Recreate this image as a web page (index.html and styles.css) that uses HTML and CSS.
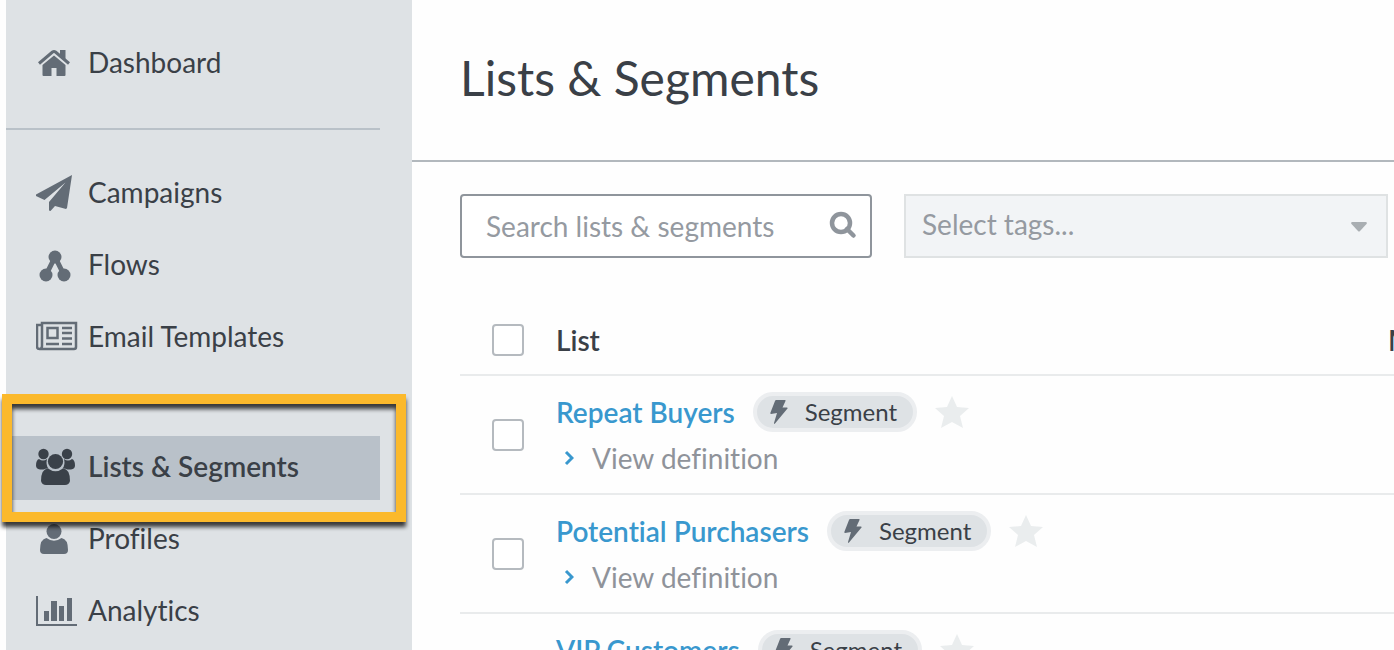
FILE: index.html
```html
<!DOCTYPE html>
<html lang="en">
<head>
  <meta charset="UTF-8">
  <meta name="viewport" content="width=device-width, initial-scale=1.0">
  <title>Lists &amp; Segments</title>
  <link rel="stylesheet" href="styles.css">
</head>
<body>
  <!-- Shared icons -->
  <svg class="sprite" aria-hidden="true">
    <symbol id="bolt" viewBox="0 0 18 24">
      <path d="M6 0H15Q16 0 15.500 1L12.500 7.500H17Q18 7.500 17.500 8.500L5 23.500Q4 24.500 4 23L7 13L1 14Q0 14 0.500 12.500L5 1Q5.500 0 6 0Z"/>
    </symbol>
    <symbol id="star" viewBox="0 0 34 32">
      <path d="M17 0L22 11L34 12L25 20L28 32L17 26L6 32L9 20L0 12L12 11Z"/>
    </symbol>
    <symbol id="chevron" viewBox="0 0 10 16">
      <path d="M2 2L8 8L2 14" fill="none" stroke="currentColor" stroke-width="3"/>
    </symbol>
  </svg>

  <aside class="sidebar">
    <nav class="nav">
      <ul class="nav-group">
        <li class="nav-item">
          <a href="#">
            <svg class="nav-icon" viewBox="0 0 42 40">
              <path d="M24 6H29.500V17L24 12Z"/>
              <path d="M3 19.500L16.500 8Q18 7 19.500 8L33 19.500" fill="none" stroke="currentColor" stroke-width="3"/>
              <path d="M18 11.500L29.500 21V31Q29.500 32 28.500 32H20.500V24H15.500V32H7.500Q6.500 32 6.500 31V21Z"/>
            </svg>
            <span>Dashboard</span>
          </a>
        </li>
      </ul>
      <ul class="nav-group">
        <li class="nav-item">
          <a href="#">
            <svg class="nav-icon" viewBox="0 0 42 40">
              <path d="M36 1L0 20.500V22L8.500 26L29.500 8.500L13 28V36.500L14.500 37L19 32L30 35L31 34Z"/>
            </svg>
            <span>Campaigns</span>
          </a>
        </li>
        <li class="nav-item">
          <a href="#">
            <svg class="nav-icon" viewBox="0 0 42 40">
              <path d="M10 29L19 11L28 29" fill="none" stroke="currentColor" stroke-width="5"/>
              <circle cx="19" cy="11" r="6.500"/>
              <circle cx="10" cy="29" r="6.500"/>
              <circle cx="28" cy="29" r="6.500"/>
            </svg>
            <span>Flows</span>
          </a>
        </li>
        <li class="nav-item">
          <a href="#">
            <svg class="nav-icon" viewBox="0 0 42 40">
              <g fill="none" stroke="currentColor" stroke-width="2.500">
                <path d="M6 28V5H40V29Q40 31 38 31H3.500Q1 31 1 28.500V7H6M6 28Q6 31 3.500 31"/>
                <rect x="11.500" y="10" width="10" height="10"/>
                <path d="M26 10H36M26 15H36M26 20.500H36M26 26H36M10 26H23"/>
              </g>
            </svg>
            <span>Email Templates</span>
          </a>
        </li>
      </ul>
      <ul class="nav-group">
        <li class="nav-item active">
          <a href="#">
            <svg class="nav-icon" viewBox="0 0 42 40">
              <circle cx="7.500" cy="6" r="5.200"/>
              <circle cx="31" cy="6" r="5.200"/>
              <circle cx="19.500" cy="13.500" r="7.600"/>
              <path d="M3 11Q7 14 11 11Q9.500 17 12.500 20.500Q9 20.500 7.500 21.500H4Q0 21 0 17.500Q0 12 3 11Z"/>
              <path d="M36 11Q32 14 28 11Q29.500 17 26.500 20.500Q30 20.500 31.500 21.500H35Q39 21 39 17.500Q39 12 36 11Z"/>
              <path d="M12 20.500Q19.500 26 27 20.500Q34 21 34 33Q33 37 29 37H10Q6 37 5 33Q5 21 12 20.500Z"/>
            </svg>
            <span>Lists &amp; Segments</span>
          </a>
          <div class="highlight"></div>
        </li>
        <li class="nav-item">
          <a href="#">
            <svg class="nav-icon" viewBox="0 0 42 40">
              <circle cx="18" cy="11.500" r="7.500"/>
              <path d="M10.500 18Q18 23.500 25.500 18Q32 19 32 30Q32 34 28 34H8Q4 34 4 30Q4 19 10.500 18Z"/>
            </svg>
            <span>Profiles</span>
          </a>
        </li>
        <li class="nav-item">
          <a href="#">
            <svg class="nav-icon" viewBox="0 0 42 40">
              <path d="M0 4H2V32H41V34H0Z"/>
              <path d="M8 19H13V29H8ZM15 9H21V29H15ZM23 14H28V29H23ZM31 6H36V29H31Z"/>
            </svg>
            <span>Analytics</span>
          </a>
        </li>
      </ul>
    </nav>
  </aside>

  <main class="main">
    <header class="page-header">
      <h1>Lists &amp; Segments</h1>
    </header>

    <div class="filters">
      <div class="search">
        <input type="text" placeholder="Search lists &amp; segments" aria-label="Search lists &amp; segments">
        <svg class="search-icon" viewBox="0 0 28 28">
          <circle cx="12" cy="12" r="9" fill="none" stroke="currentColor" stroke-width="4.500"/>
          <path d="M18 18L24.500 24.500" stroke="currentColor" stroke-width="4.500" stroke-linecap="round"/>
        </svg>
      </div>
      <div class="tags">
        <select aria-label="Select tags">
          <option>Select tags...</option>
        </select>
        <svg class="caret" viewBox="0 0 16 10">
          <path d="M1 0H15Q16.500 0.500 15.500 2L9 9Q8 10 7 9L0.500 2Q-0.500 0.500 1 0Z"/>
        </svg>
      </div>
    </div>

    <table class="list-table">
      <thead>
        <tr>
          <th class="check-col"><input type="checkbox" aria-label="Select all"></th>
          <th class="list-col">List</th>
          <th>Members</th>
        </tr>
      </thead>
      <tbody>
        <tr>
          <td class="check-col"><input type="checkbox" aria-label="Repeat Buyers"></td>
          <td>
            <div class="list-title">
              <a href="#">Repeat Buyers</a>
              <span class="badge"><svg><use href="#bolt"/></svg>Segment</span>
              <button class="star" aria-label="Star"><svg><use href="#star"/></svg></button>
            </div>
            <button class="definition"><svg><use href="#chevron"/></svg>View definition</button>
          </td>
          <td></td>
        </tr>
        <tr>
          <td class="check-col"><input type="checkbox" aria-label="Potential Purchasers"></td>
          <td>
            <div class="list-title">
              <a href="#">Potential Purchasers</a>
              <span class="badge"><svg><use href="#bolt"/></svg>Segment</span>
              <button class="star" aria-label="Star"><svg><use href="#star"/></svg></button>
            </div>
            <button class="definition"><svg><use href="#chevron"/></svg>View definition</button>
          </td>
          <td></td>
        </tr>
        <tr>
          <td class="check-col"><input type="checkbox" aria-label="VIP Customers"></td>
          <td>
            <div class="list-title">
              <a href="#">VIP Customers</a>
              <span class="badge"><svg><use href="#bolt"/></svg>Segment</span>
              <button class="star" aria-label="Star"><svg><use href="#star"/></svg></button>
            </div>
            <button class="definition"><svg><use href="#chevron"/></svg>View definition</button>
          </td>
          <td></td>
        </tr>
      </tbody>
    </table>
  </main>
</body>
</html>
```
FILE: styles.css
```css
/* Global Styles */
* {
  margin: 0;
  padding: 0;
  box-sizing: border-box;
}

body {
  display: flex;
  height: 100vh;
  padding-left: 6px;
  overflow: hidden;
  background: #fefefe;
  color: #3a4047;
  font-family: Lato, sans-serif;
  font-size: 28px;
  font-variant-ligatures: none;
  line-height: 32px;
}

a {
  color: inherit;
  text-decoration: none;
}

button,
input,
select {
  font: inherit;
}

button {
  border: 0;
  background: none;
  cursor: pointer;
}

svg {
  fill: currentColor;
}

.sprite {
  position: absolute;
  width: 0;
  height: 0;
}

/* Sidebar */
.sidebar {
  flex: 0 0 406px;
  padding-right: 32px;
  background: #dee2e5;
}

.nav-group {
  list-style: none;
  display: flex;
  flex-direction: column;
  gap: 8px;
}

.nav-group:first-child {
  padding: 32px 0;
  margin-bottom: 32px;
  border-bottom: 2px solid #b9c1c8;
}

.nav-group + .nav-group + .nav-group {
  margin-top: 66px;
}

.nav-item {
  position: relative;
}

.nav-item a {
  display: flex;
  align-items: center;
  gap: 10px;
  height: 64px;
  padding-left: 30px;
  padding-bottom: 4px;
}

.nav-icon {
  width: 42px;
  height: 40px;
  margin-top: 4px;
  color: #636c76;
}

.nav-item.active {
  z-index: 1;
  background: #b9c1c9;
  font-weight: 600;
}

.nav-item.active .nav-icon {
  color: #3a4149;
}

/* Callout frame around the active item */
.highlight {
  position: absolute;
  top: -42px;
  right: -26px;
  bottom: -22px;
  left: -4px;
  border: 10px solid #fbb92c;
  filter: drop-shadow(0 5px 2px rgba(0, 0, 0, 0.75));
  pointer-events: none;
}

/* Main */
.main {
  flex: 1;
  min-width: 0;
  overflow: hidden;
}

.page-header {
  padding: 46px 48px 50px;
  border-bottom: 2px solid #b2b8bd;
}

.page-header h1 {
  font-size: 48px;
  font-weight: 400;
  line-height: 64px;
}

.filters {
  display: flex;
  gap: 32px;
  padding: 32px 6px 32px 48px;
}

.search {
  position: relative;
  flex: 412;
}

.tags {
  position: relative;
  flex: 484;
}

.search input,
.tags select {
  display: block;
  width: 100%;
  height: 64px;
}

.search input {
  padding: 0 64px 0 24px;
  border: 2px solid #8f959c;
  border-radius: 4px;
  background: #fff;
  color: #3a4047;
}

.search input::placeholder {
  color: #959aa1;
  opacity: 1;
}

.search-icon {
  position: absolute;
  top: 17px;
  right: 15px;
  width: 28px;
  height: 28px;
  color: #8f959c;
}

.tags select {
  appearance: none;
  padding: 0 48px 4px 16px;
  border: 2px solid #dfe2e3;
  border-radius: 0;
  background: #f2f4f6;
  color: #959aa1;
}

.caret {
  position: absolute;
  top: 28px;
  right: 21px;
  width: 16px;
  height: 10px;
  color: #a9aeb2;
  pointer-events: none;
}

/* Table */
.list-table {
  width: 1200px;
  margin: 16px 0 0 48px;
  border-collapse: collapse;
  table-layout: fixed;
}

.list-table tr {
  border-bottom: 2px solid #e9ebec;
}

.list-table th {
  height: 69px;
  font-weight: 600;
  text-align: left;
}

.list-table td {
  height: 119px;
  padding-top: 16px;
  vertical-align: top;
}

.list-table .check-col {
  width: 96px;
  padding: 0 0 0 32px;
  vertical-align: middle;
}

.list-col {
  width: 832px;
}

input[type="checkbox"] {
  appearance: none;
  display: block;
  width: 32px;
  height: 32px;
  border: 2px solid #b5babf;
  border-radius: 4px;
  background: #fff;
}

.list-title {
  display: flex;
  align-items: center;
  gap: 18px;
  height: 40px;
}

.list-title a {
  color: #3998ce;
  font-weight: 600;
}

.badge {
  display: flex;
  align-items: center;
  gap: 17px;
  height: 40px;
  padding: 0 16px 0 13px;
  border: 4px solid #eceef0;
  border-radius: 20px;
  background: #dee2e5;
  font-size: 24px;
}

.badge svg {
  width: 18px;
  height: 24px;
  color: #636c76;
}

.star {
  color: #eaedee;
}

.star svg {
  display: block;
  width: 34px;
  height: 32px;
}

.definition {
  display: flex;
  align-items: center;
  gap: 18px;
  margin-top: 10px;
  padding-left: 8px;
  color: #8f939a;
}

.definition svg {
  width: 10px;
  height: 16px;
  color: #3998ce;
}
```
